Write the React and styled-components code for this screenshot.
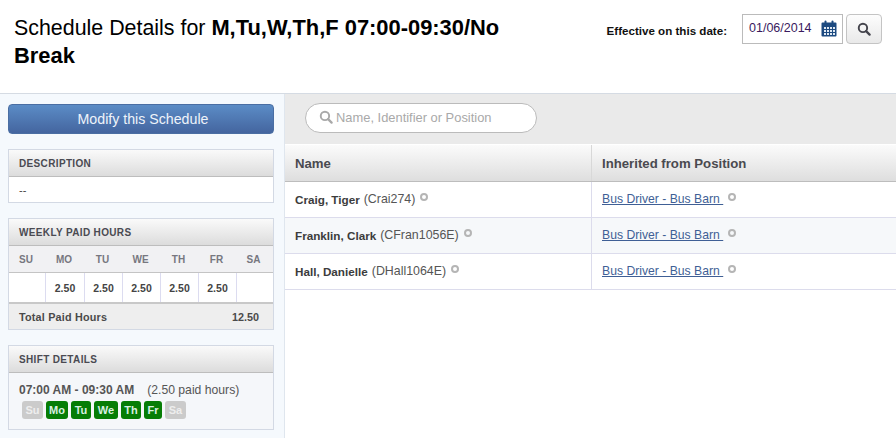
import styled, { createGlobalStyle } from 'styled-components';

const GlobalStyle = createGlobalStyle`
	html, body {
		margin: 0;
		padding: 0;
		background: #fff;
		font-family: "Liberation Sans", Arial, sans-serif;
	}
	* {
		box-sizing: border-box;
	}
`;

const Page = styled.div`
	width: 896px;
	height: 438px;
	overflow: hidden;
	display: flex;
	flex-direction: column;
`;

const Header = styled.header`
	height: 94px;
	flex: none;
	display: flex;
	justify-content: space-between;
	border-bottom: 1px solid #d5dbe3;
	padding: 14px 14px 0;
`;

const Title = styled.h1`
	margin: 0;
	width: 500px;
	font-size: 21.4px;
	line-height: 27px;
	font-weight: 400;
	color: #000;
	b {
		font-weight: 700;
		font-size: 21.9px;
	}
`;

const DateForm = styled.div`
	display: flex;
	align-items: flex-start;
`;

const DateLabel = styled.label`
	font-size: 11.6px;
	font-weight: 700;
	color: #111;
	margin-top: 10px;
	margin-right: 15px;
`;

const DateInput = styled.div`
	width: 101px;
	height: 30px;
	border: 1px solid #bbb;
	display: flex;
	align-items: center;
	justify-content: space-between;
	padding: 0 5px 2px 6px;
	font-size: 12.5px;
	color: #3a1a5e;
	background: #fff;
`;

const SearchButton = styled.button`
	width: 36px;
	height: 30px;
	margin-left: 3px;
	border: 1px solid #c4c4c4;
	border-radius: 4px;
	background: linear-gradient(#fdfdfd, #e9e9e9);
	padding: 0;
	display: flex;
	align-items: center;
	justify-content: center;
`;

const Body = styled.div`
	flex: 1;
	display: flex;
	min-height: 0;
`;

const Sidebar = styled.aside`
	width: 285px;
	flex: none;
	background: #f5f9fd;
	border-right: 1px solid #dfe6ee;
	padding: 10px 10px 0 8px;
	display: flex;
	flex-direction: column;
`;

const PrimaryButton = styled.button`
	height: 30px;
	flex: none;
	width: 100%;
	border: 1px solid #4a6ea3;
	border-radius: 4px;
	background: linear-gradient(#5b8cc6, #44659f);
	color: #eef3fa;
	font-family: inherit;
	font-size: 14.2px;
	padding: 0 0 0 4px;
	margin-bottom: 15px;
`;

const Panel = styled.section`
	flex: none;
	border: 1px solid #d3d9e4;
	background: #fff;
	margin-bottom: 15px;
`;

const PanelHeader = styled.h2`
	margin: 0;
	height: 27px;
	padding: 0 10px;
	display: flex;
	align-items: center;
	font-size: 10px;
	font-weight: 700;
	letter-spacing: 0.35px;
	color: #4a4a52;
	background: linear-gradient(#fafafa, #dcdcdc);
	border-bottom: 1px solid #bdbdbd;
`;

const PanelText = styled.div`
	height: 25px;
	padding: 0 10px;
	display: flex;
	align-items: center;
	font-size: 11px;
	color: #444;
`;

const DayGrid = styled.div`
	display: grid;
	grid-template-columns: 37px 39px 38px 38px 38px 38px 1fr;
`;

const DayName = styled.div`
	height: 27px;
	background: #f1f1f3;
	border-bottom: 1px solid #c4c4c4;
	padding-right: 3px;
	display: flex;
	align-items: center;
	justify-content: center;
	font-size: 10px;
	font-weight: 700;
	color: #77777f;
`;

const DayValue = styled.div`
	height: 29px;
	background: #fff;
	border-right: ${p => (p.$last ? 'none' : '1px solid #dcdcf0')};
	display: flex;
	align-items: center;
	justify-content: center;
	font-size: 10.5px;
	font-weight: 700;
	color: #444;
`;

const TotalRow = styled.div`
	height: 27px;
	background: #eeeeee;
	border-top: 2px solid #c8c8c8;
	padding: 0 14px 0 10px;
	display: flex;
	align-items: center;
	justify-content: space-between;
	font-size: 10.8px;
	font-weight: 700;
	color: #4a4a4a;
	span:first-child {
		letter-spacing: 0.2px;
	}
`;

const ShiftBody = styled.div`
	height: 56px;
	padding: 10px 10px 0;
	background: #f5f7fa;
`;

const ShiftTime = styled.div`
	font-size: 12.2px;
	line-height: 14px;
	color: #555;
	b {
		font-weight: 700;
		font-size: 12px;
		margin-right: 13px;
	}
`;

const DayBadges = styled.div`
	display: flex;
	gap: 3px;
	margin: 4px 0 0 3px;
`;

const DayBadge = styled.span`
	height: 18px;
	padding: 0 3px;
	width: ${p => p.$w}px;
	border-radius: 3px;
	background: ${p => (p.$on ? '#067d06' : '#cbcbcb')};
	color: ${p => (p.$on ? '#d8f0e2' : '#eeeeee')};
	display: flex;
	align-items: center;
	justify-content: center;
	font-size: 11px;
	font-weight: 700;
`;

const Main = styled.main`
	flex: 1;
	min-width: 0;
`;

const SearchBar = styled.div`
	height: 50px;
	background: #eaeaea;
	padding: 9px 0 0 20px;
`;

const SearchField = styled.div`
	width: 232px;
	height: 30px;
	border: 1px solid #bbb;
	border-radius: 15px;
	background: #fff;
	display: flex;
	align-items: center;
	gap: 3px;
	padding: 0 0 2px 13px;
	font-size: 12.9px;
	color: #a9a9a9;
`;

const Row = styled.div`
	display: grid;
	grid-template-columns: 307px 1fr;
	height: 36px;
	background: ${p => (p.$alt ? '#f6f8fa' : '#fff')};
	border-bottom: 1px solid #dcdcec;
`;

const HeadRow = styled(Row)`
	height: 37px;
	margin-top: 1px;
	background: linear-gradient(#fbfbfb, #dedede);
	border-bottom: 1px solid #bdbdbd;
`;

const HeadCell = styled.div`
	padding-left: 10px;
	display: flex;
	align-items: center;
	font-size: 13.2px;
	font-weight: 700;
	color: #4a4a50;
	border-right: ${p => (p.$first ? '1px solid #d8d8d8' : 'none')};
`;

const Cell = styled.div`
	padding: 0 0 1px 10px;
	display: flex;
	align-items: center;
	font-size: 12.4px;
	color: #555;
	border-right: ${p => (p.$first ? '1px solid #dcdcec' : 'none')};
	b {
		font-weight: 700;
		font-size: 11.7px;
		color: #3c3c3c;
		margin-right: 4px;
	}
`;

const PositionLink = styled.a`
	color: #3f5f95;
	font-size: 12.2px;
	text-decoration: underline;
	white-space: pre;
`;

const InfoDot = styled.span`
	width: 8px;
	height: 8px;
	border-radius: 50%;
	border: 2px solid #b5b5b5;
	margin-left: ${p => p.$gap}px;
	margin-bottom: 4px;
`;

const SearchIcon = ({ size, color }) => (
	<svg width={size} height={size} viewBox="0 0 16 16" fill="none">
		<circle cx="6.8" cy="6.8" r="4.8" stroke={color} strokeWidth="2.2" />
		<path d="M10.4 10.4 14.4 14.4" stroke={color} strokeWidth="2.6" strokeLinecap="round" />
	</svg>
);

const CalendarIcon = () => (
	<svg width="16" height="17" viewBox="0 0 16 17">
		<path fill="#1c4a80" d="M1.5 2.5h13a1 1 0 0 1 1 1v12a1 1 0 0 1-1 1h-13a1 1 0 0 1-1-1v-12a1 1 0 0 1 1-1z" />
		<rect x="3.5" y="0.5" width="2" height="3.5" rx="1" fill="#1c4a80" />
		<rect x="10.5" y="0.5" width="2" height="3.5" rx="1" fill="#1c4a80" />
		<g fill="#dfe8f2">
			{[7, 10, 13].map(y =>
				[3, 6, 9, 12].map(x => <rect key={`${x}-${y}`} x={x} y={y} width="2" height="2" />)
			)}
		</g>
	</svg>
);

const days = ['SU', 'MO', 'TU', 'WE', 'TH', 'FR', 'SA'];
const hours = ['', '2.50', '2.50', '2.50', '2.50', '2.50', ''];
const badges = [
	['Su', false, 21],
	['Mo', true, 22],
	['Tu', true, 20],
	['We', true, 24],
	['Th', true, 20],
	['Fr', true, 18],
	['Sa', false, 21],
];
const people = [
	['Craig, Tiger', '(Crai274)'],
	['Franklin, Clark', '(CFran1056E)'],
	['Hall, Danielle', '(DHall1064E)'],
];

const App = () => (
	<Page>
		<GlobalStyle />
		<Header>
			<Title>
				Schedule Details for <b>M,Tu,W,Th,F 07:00-09:30/No</b> <b>Break</b>
			</Title>
			<DateForm>
				<DateLabel>Effective on this date:</DateLabel>
				<DateInput>
					01/06/2014
					<CalendarIcon />
				</DateInput>
				<SearchButton>
					<SearchIcon size={14} color="#44444c" />
				</SearchButton>
			</DateForm>
		</Header>
		<Body>
			<Sidebar>
				<PrimaryButton>Modify this Schedule</PrimaryButton>
				<Panel>
					<PanelHeader>DESCRIPTION</PanelHeader>
					<PanelText>--</PanelText>
				</Panel>
				<Panel>
					<PanelHeader>WEEKLY PAID HOURS</PanelHeader>
					<DayGrid>
						{days.map(day => (
							<DayName key={day}>{day}</DayName>
						))}
						{hours.map((value, index) => (
							<DayValue key={index} $last={index === 6}>
								{value}
							</DayValue>
						))}
					</DayGrid>
					<TotalRow>
						<span>Total Paid Hours</span>
						<span>12.50</span>
					</TotalRow>
				</Panel>
				<Panel>
					<PanelHeader>SHIFT DETAILS</PanelHeader>
					<ShiftBody>
						<ShiftTime>
							<b>07:00 AM - 09:30 AM</b>(2.50 paid hours)
						</ShiftTime>
						<DayBadges>
							{badges.map(([label, on, width]) => (
								<DayBadge key={label} $on={on} $w={width}>
									{label}
								</DayBadge>
							))}
						</DayBadges>
					</ShiftBody>
				</Panel>
			</Sidebar>
			<Main>
				<SearchBar>
					<SearchField>
						<SearchIcon size={14} color="#a9a9a9" />
						Name, Identifier or Position
					</SearchField>
				</SearchBar>
				<HeadRow>
					<HeadCell $first>Name</HeadCell>
					<HeadCell>Inherited from Position</HeadCell>
				</HeadRow>
				{people.map(([name, id], index) => (
					<Row key={id} $alt={index === 1}>
						<Cell $first>
							<b>{name}</b>
							{id}
							<InfoDot $gap={5} />
						</Cell>
						<Cell>
							<PositionLink>Bus Driver - Bus Barn </PositionLink>
							<InfoDot $gap={5} />
						</Cell>
					</Row>
				))}
			</Main>
		</Body>
	</Page>
);

export default App;
